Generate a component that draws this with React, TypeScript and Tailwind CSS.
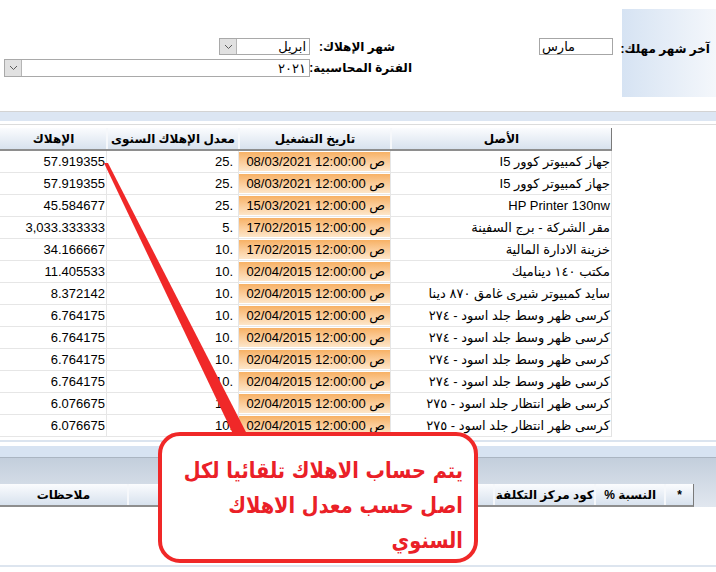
import React from 'react';

const rows: [string, string, string, string][] = [
  ['جهاز كمبيوتر كوور I5', '08/03/2021', '25.', '57.919355'],
  ['جهاز كمبيوتر كوور I5', '08/03/2021', '25.', '57.919355'],
  ['HP Printer 130nw', '15/03/2021', '25.', '45.584677'],
  ['مقر الشركة - برج السفينة', '17/02/2015', '5.', '3,033.333333'],
  ['خزينة الادارة المالية', '17/02/2015', '10.', '34.166667'],
  ['مكتب ١٤٠ ديناميك', '02/04/2015', '10.', '11.405533'],
  ['سايد كمبيوتر شيرى غامق ٨٧٠ دينا', '02/04/2015', '10.', '8.372142'],
  ['كرسى ظهر وسط جلد اسود - ٢٧٤', '02/04/2015', '10.', '6.764175'],
  ['كرسى ظهر وسط جلد اسود - ٢٧٤', '02/04/2015', '10.', '6.764175'],
  ['كرسى ظهر وسط جلد اسود - ٢٧٤', '02/04/2015', '10.', '6.764175'],
  ['كرسى ظهر وسط جلد اسود - ٢٧٤', '02/04/2015', '10.', '6.764175'],
  ['كرسى ظهر انتظار جلد اسود - ٢٧٥', '02/04/2015', '10.', '6.076675'],
  ['كرسى ظهر انتظار جلد اسود - ٢٧٥', '02/04/2015', '10.', '6.076675'],
];

function Chevron() {
  return (
    <svg width="9" height="6" viewBox="0 0 9 6">
      <path d="M1 1 L4.5 4.5 L8 1" fill="none" stroke="#5a5a5a" strokeWidth="1" />
    </svg>
  );
}

function Select({ w, h, text }: { w: string; h: string; text: string }) {
  return (
    <div className={`flex ${w} ${h} border border-[#a9a9a9] bg-white`}>
      <div className="flex-1 flex items-center pr-[3px] text-[13px] leading-none">{text}</div>
      <div className="w-[17px] h-full bg-[#e1e1e1] border-r border-[#b5b5b5] flex items-center justify-center">
        <Chevron />
      </div>
    </div>
  );
}

export default function App() {
  return (
    <div
      dir="rtl"
      className="relative w-[716px] h-[572px] overflow-hidden bg-white text-black text-[13px] font-['Liberation_Sans','DejaVu_Sans',sans-serif]"
    >
      {/* top form */}
      <div className="flex h-[112px] border-b border-[#d3d3d3]">
        <div className="w-[94px] h-[88px] mt-[9px] bg-gradient-to-l from-[#f4f7fb] to-[#d6e3f3] pt-[31px] pr-[6px] font-bold whitespace-nowrap text-[12px]">
          آخر شهر مهلك:
        </div>
        <div
          dir="ltr"
          className="mr-[9px] mt-[38px] w-[74px] h-[17px] border border-[#a6a6a6] flex items-center justify-start pl-[2px] text-[13px] leading-none"
        >
          مارس
        </div>
        <div className="mr-[127px] mt-[38px] flex flex-col gap-[4px]">
          <div className="flex items-center h-[17px]">
            <div className="w-[102px] text-left pl-[9px] font-bold whitespace-nowrap text-[12px]">شهر الإهلاك:</div>
            <Select w="w-[91px]" h="h-[17px]" text="ابريل" />
          </div>
          <div className="flex items-center h-[18px]">
            <div className="w-[102px] text-left pl-[4px] font-bold whitespace-nowrap text-[12px]">الفترة المحاسبية:</div>
            <Select w="w-[306px]" h="h-[18px]" text="٢٠٢١" />
          </div>
        </div>
      </div>
      <div className="h-[9px] bg-[#dce6f3]" />
      <div className="h-[3px]" />
      <div className="h-px bg-[#dcdcdc]" />
      <div className="h-[3px]" />

      {/* main grid */}
      <div className="w-[612px] mr-auto">
        <div className="flex h-[23px] bg-gradient-to-b from-[#fbfcfe] to-[#d8e2ee] border-b-2 border-[#8e8e8e] border-r border-r-[#7a7a7a] font-bold text-[12px]">
          <div className="w-[221px] flex items-center justify-center border-l-2 border-[#f6f8fb]">الأصل</div>
          <div className="w-[152px] flex items-center justify-center border-l-2 border-[#f6f8fb]">تاريخ التشغيل</div>
          <div className="w-[132px] flex items-center justify-center border-l-2 border-[#f6f8fb]">معدل الإهلاك السنوى</div>
          <div className="w-[105px] flex items-center justify-center">الإهلاك</div>
        </div>
        {rows.map((r, i) => (
          <div key={i} className="flex h-[22px] border-b border-[#e6e6e6] border-r border-r-[#e2e2e2]">
            <div className="w-[221px] flex items-center pr-px border-l border-[#e6e6e6] whitespace-nowrap overflow-hidden">{r[0]}</div>
            <div className="w-[152px] border-l border-[#e6e6e6] py-[1px]">
              <div className="h-full bg-gradient-to-b from-[#f7b164] to-[#fde6c9] flex items-center pr-[5px]">
                <span dir="ltr">{r[1]} 12:00:00 ص</span>
              </div>
            </div>
            <div className="w-[132px] flex items-center pr-[5px] border-l border-[#e6e6e6]">
              <span dir="ltr">{r[2]}</span>
            </div>
            <div className="w-[105px] flex items-center pr-px">
              <span dir="ltr">{r[3]}</span>
            </div>
          </div>
        ))}
      </div>

      {/* lower section */}
      <div className="h-[3px]" />
      <div className="h-[2px] bg-[#dbe4ef]" />
      <div className="h-[4px]" />
      <div className="h-[11px] bg-[#d7e3f2]" />
      <div className="h-[50px] border-t border-[#aab5c2] bg-gradient-to-b from-[#c3cedc] to-[#e1e7ef] flex flex-col justify-end">
        <div className="flex h-[23px] w-[694px] mr-[22px] bg-gradient-to-b from-[#fbfcfe] to-[#d8e2ee] border-b-2 border-[#8e8e8e] border-r border-r-[#7a7a7a] font-bold text-[12px]">
          <div className="w-[29px] flex items-center justify-center border-l-2 border-[#f6f8fb]">*</div>
          <div className="w-[70px] flex items-center justify-center border-l-2 border-[#f6f8fb]">النسبة %</div>
          <div className="w-[101px] flex items-center justify-center border-l-2 border-[#f6f8fb]">كود مركز التكلفة</div>
          <div className="w-[367px] border-l-2 border-[#f6f8fb]" />
          <div className="w-[127px] flex items-center justify-center">ملاحظات</div>
        </div>
      </div>
      <div className="h-[58px]" />
      <div className="h-[2px] bg-[#dde5ef]" />

      {/* callout tail */}
      <svg className="absolute left-0 top-0 pointer-events-none" width="716" height="572">
        <polygon points="104,163 108,163 248,436 234,436" fill="#f02828" />
      </svg>
      {/* callout box */}
      <div className="absolute left-[158px] top-[432px] w-[320px] h-[131px] border-4 border-[#f02828] rounded-[22px] bg-white pt-[17px] pr-[11px]">
        <div className="origin-right scale-x-[0.88] text-right font-bold text-[22px] leading-[35px] text-[#ea2027] font-['DejaVu_Sans',sans-serif] whitespace-nowrap">
          يتم حساب الاهلاك تلقائيا لكل
          <br />
          اصل حسب معدل الاهلاك
          <br />
          السنوي
        </div>
      </div>
    </div>
  );
}
